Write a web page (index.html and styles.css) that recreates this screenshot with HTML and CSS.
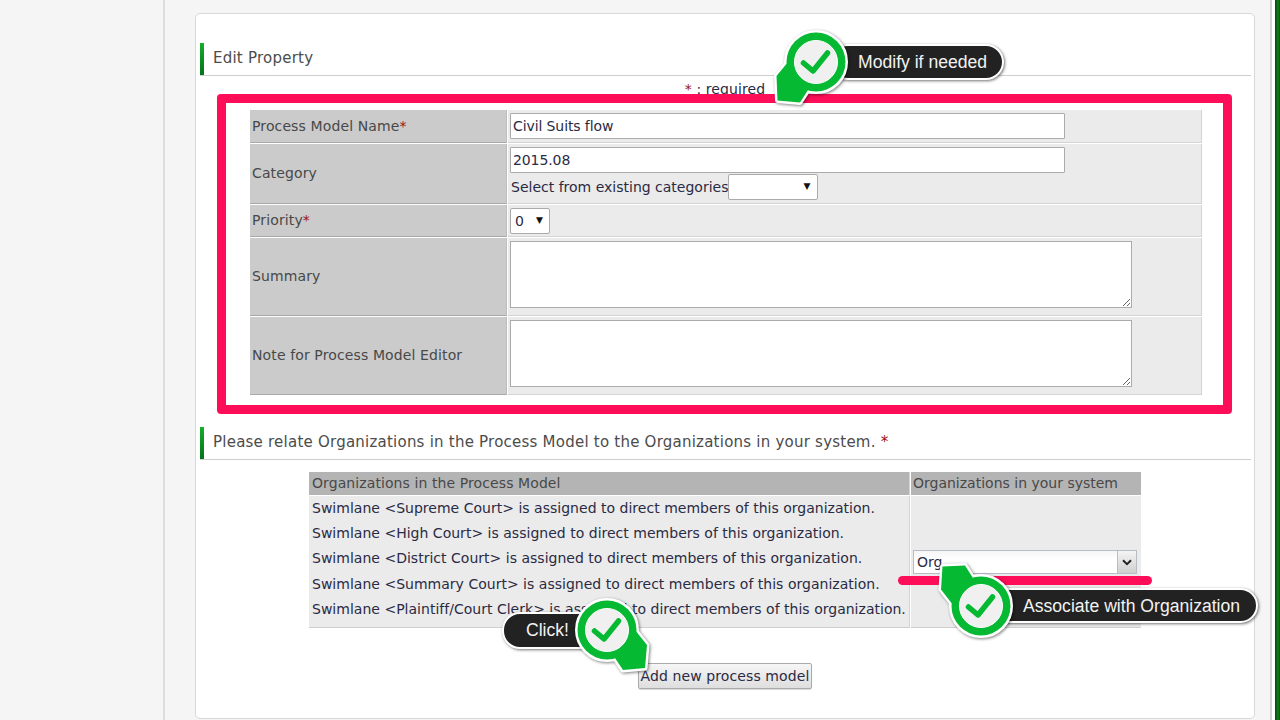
FILE: index.html
```html
<!DOCTYPE html>
<html lang="en">
<head>
<meta charset="utf-8">
<title>Edit Property</title>
<link rel="stylesheet" href="styles.css">
</head>
<body>
<div class="page">
  <aside class="sidebar"></aside>
  <main class="main">
    <section class="panel">
      <h2 class="heading">Edit Property</h2>
      <p class="required"><span class="star">*</span> : required</p>
      <table class="form">
        <tr class="r1">
          <th>Process Model Name<span class="star">*</span></th>
          <td><input class="text" type="text" value="Civil Suits flow"></td>
        </tr>
        <tr class="r2">
          <th>Category</th>
          <td>
            <input class="text" type="text" value="2015.08">
            <div class="cat">Select from existing categories<span class="sel sel-cat"><select></select></span></div>
          </td>
        </tr>
        <tr class="r3">
          <th>Priority<span class="star">*</span></th>
          <td><span class="sel sel-pri"><select><option>0</option></select></span></td>
        </tr>
        <tr class="r4">
          <th>Summary</th>
          <td><textarea></textarea></td>
        </tr>
        <tr class="r5">
          <th>Note for Process Model Editor</th>
          <td><textarea></textarea></td>
        </tr>
      </table>
      <h2 class="heading second">Please relate Organizations in the Process Model to the Organizations in your system. <span class="star">*</span></h2>
      <table class="orgs">
        <tr>
          <th class="c1">Organizations in the Process Model</th>
          <th class="c2">Organizations in your system</th>
        </tr>
        <tr>
          <td class="c1">
            <div class="line">Swimlane &lt;Supreme Court&gt; is assigned to direct members of this organization.</div>
            <div class="line">Swimlane &lt;High Court&gt; is assigned to direct members of this organization.</div>
            <div class="line">Swimlane &lt;District Court&gt; is assigned to direct members of this organization.</div>
            <div class="line">Swimlane &lt;Summary Court&gt; is assigned to direct members of this organization.</div>
            <div class="line">Swimlane &lt;Plaintiff/Court Clerk&gt; is assigned to direct members of this organization.</div>
          </td>
          <td class="c2">
            <div class="combo"><span class="combo-text">Org</span><span class="combo-btn"><svg width="10" height="7" viewBox="0 0 10 7"><path d="M1 1.2 5 5.2 9 1.2" fill="none" stroke="#222" stroke-width="2"/></svg></span></div>
          </td>
        </tr>
      </table>
      <div class="actions"><button class="add" type="button">Add new process model</button></div>
    </section>
  </main>
  <div class="edge"></div>

  <div class="box"></div>
  <div class="underline"></div>

  <div class="pill pill-1">Modify if needed</div>
  <svg class="pin pin-1" width="90" height="90" viewBox="-45 -45 90 90">
    <g class="pin-edge"><circle r="29.5"/><path d="M-39.5 14-28 0 0 0-8 28-16 40.5-38.5 38.5Z"/></g>
    <g class="pin-fill"><circle r="29.5"/><path d="M-39.5 14-28 0 0 0-8 28-16 40.5-38.5 38.5Z"/></g>
    <circle class="pin-face" r="21.5"/>
    <path class="pin-check" d="M-12.5 1-3 9 11.5-9"/>
  </svg>

  <div class="pill pill-2">Associate with Organization</div>
  <svg class="pin pin-2" width="90" height="90" viewBox="-45 -45 90 90">
    <g class="pin-edge"><circle r="29.5"/><path d="M-40-16.5-28-1 0 0-8-28-16-40.5-38.5-39.5Z"/></g>
    <g class="pin-fill"><circle r="29.5"/><path d="M-40-16.5-28-1 0 0-8-28-16-40.5-38.5-39.5Z"/></g>
    <circle class="pin-face" r="21.5"/>
    <path class="pin-check" d="M-12.5 1-3 9 11.5-9"/>
  </svg>

  <div class="pill pill-3">Click!</div>
  <svg class="pin pin-3" width="90" height="90" viewBox="-45 -45 90 90">
    <g class="pin-edge"><circle r="29.5"/><path d="M40 15 28 0 0 0 8 28 16 40 38 38Z"/></g>
    <g class="pin-fill"><circle r="29.5"/><path d="M40 15 28 0 0 0 8 28 16 40 38 38Z"/></g>
    <circle class="pin-face" r="21.5"/>
    <path class="pin-check" d="M-12.5 1-3 9 11.5-9"/>
  </svg>
</div>
</body>
</html>
```
FILE: styles.css
```css
* { box-sizing: border-box; }
html, body { margin: 0; padding: 0; }
body {
  font-family: "DejaVu Sans", sans-serif;
  font-size: 14px;
  color: #2a2a44;
  background: #f5f5f5;
}
.page {
  position: relative;
  display: flex;
  width: 1280px;
  height: 720px;
  overflow: hidden;
  background: #f5f5f5;
}
.sidebar {
  width: 165px;
  flex: none;
  border-right: 2px solid #dcdcdc;
}
.main {
  flex: 1;
  padding: 13px 15px 1px 30px;
}
.edge {
  width: 10px;
  flex: none;
  border-left: 2px solid #d4d4d4;
  background: linear-gradient(90deg, #fff 0 3.5px, #0a5010 3.5px, #118016 6px, #0a5010);
}
.panel {
  height: 706px;
  padding: 29px 4px 0 4px;
  background: #fff;
  border: 1px solid #d8d8d8;
  border-radius: 5px;
}
.heading {
  margin: 0 -1px 0 0;
  height: 32px;
  padding-left: 9px;
  font-size: 15px;
  font-weight: 400;
  line-height: 30px;
  letter-spacing: 0.23px;
  color: #4c4c4c;
  border-style: solid;
  border-width: 0 0 0 4px;
  border-image: linear-gradient(#14b02a, #05701a) 1;
  box-shadow: 0 1px 0 #cfcfcf;
}
.heading.second { margin-top: 31px; }
.star { color: #a01010; }
.required {
  margin: 6px 0 0;
  height: 28px;
  line-height: 16px;
  text-align: center;
  letter-spacing: 0.1px;
}
.form, .orgs {
  margin: 0 auto;
  border-collapse: separate;
  border-spacing: 1px;
  table-layout: fixed;
}
.form { width: 954px; margin-left: 49px; }
.form th {
  width: 257px;
  padding: 0 2px 2px;
  text-align: left;
  font-weight: 400;
  letter-spacing: 0.12px;
  color: #484848;
  background: #cbcbcb;
  border-right: 1px solid #bdbdbd;
  border-bottom: 1px solid #a8a8a8;
}
.form .r1 th { padding-bottom: 0; }
.form td {
  padding: 3px 2px 0;
  vertical-align: top;
  background: #ebebeb;
  border-right: 1px solid #d4d4d4;
  border-bottom: 1px solid #d4d4d4;
}
.r1 th, .r1 td { height: 33px; }
.r2 th, .r2 td { height: 60px; }
.r3 th, .r3 td { height: 32px; }
.r4 th, .r4 td { height: 78px; }
.r5 th, .r5 td { height: 78px; }
.text {
  display: block;
  width: 555px;
  height: 26px;
  margin: 0;
  padding: 1px 2px 1px 1px;
  text-indent: 1px;
  font: inherit;
  letter-spacing: -0.1px;
  color: inherit;
  background: #fff;
  border: 1px solid #ababab;
  border-radius: 1px;
  outline: 0;
}
.cat { display: flex; align-items: center; height: 27px; padding-left: 1px; }
.sel { position: relative; display: inline-block; }
.sel select {
  display: block;
  height: 26px;
  padding: 0 4px;
  font: inherit;
  color: inherit;
  appearance: none;
  background: #fff;
  border: 1px solid #ababab;
  border-radius: 2px;
}
.sel::after {
  content: "▼";
  position: absolute;
  top: 7px;
  font-size: 9px;
  color: #111;
}
.sel-cat::after { right: 8px; }
.sel-pri::after { right: 7px; }
.sel-cat select { width: 90px; }
.sel-pri select { width: 40px; }
textarea {
  display: block;
  width: 622px;
  height: 67px;
  margin: 0;
  background: #fff;
  border: 1px solid #ababab;
  border-radius: 0;
  outline: 0;
}
.orgs { width: 834px; margin-top: 12px; }
.orgs th {
  height: 23px;
  padding: 0 2px 2px;
  text-align: left;
  font-weight: 400;
  color: #484848;
  background: #b4b4b4;
}
.orgs .c1 { width: 601px; letter-spacing: 0.015px; border-right: 1px solid #d4d4d4; }
.orgs th.c1 { padding-left: 3px; letter-spacing: 0.09px; }
.orgs td {
  padding: 2px 2px 3px;
  vertical-align: top;
  background: #ebebeb;
  border-bottom: 1px solid #cfcfcf;
}
.orgs td.c1 { padding-left: 3px; }
.line { height: 25.2px; line-height: 21px; }
.orgs td.c2 { padding: 54px 3px 0 2px; }
.combo {
  display: flex;
  height: 24px;
  width: 224px;
  background: linear-gradient(#f6f6f6, #fff 40%);
  border: 1px solid #b8bcc8;
}
.combo-text { flex: 1; padding: 1px 3px; line-height: 20px; }
.combo-btn {
  display: flex;
  align-items: center;
  justify-content: center;
  width: 19px;
  background: linear-gradient(#f4f4f4, #cfcfcf);
  border-left: 1px solid #b8bcc8;
}
.actions { margin-top: 34px; text-align: center; }
.add {
  width: 174px;
  height: 26px;
  padding: 0;
  font: inherit;
  letter-spacing: 0.1px;
  color: inherit;
  background: linear-gradient(#f6f6f6, #dedede);
  border: 1px solid #aaa;
  border-radius: 2px;
  box-shadow: 0 1px 1px rgba(0,0,0,.15);
}
.box {
  position: absolute;
  left: 217px;
  top: 94px;
  width: 1015px;
  height: 320px;
  border: 9px solid #fe0d58;
  border-radius: 4px;
}
.underline {
  position: absolute;
  left: 898px;
  top: 576px;
  width: 254px;
  height: 9px;
  border-radius: 5px;
  background: #fe0d58;
}
.pill {
  position: absolute;
  display: flex;
  align-items: center;
  color: #f2f2f2;
  font-family: "Liberation Sans", sans-serif;
  font-size: 17.6px;
  white-space: nowrap;
  background: #222;
  border: 2px solid #fff;
  border-radius: 18px;
  box-shadow: 1px 1px 3px rgba(0,0,0,.55);
}
.pill-1 { left: 830px; top: 44px; width: 174px; height: 36px; padding-left: 26px; }
.pill-2 { left: 990px; top: 588px; width: 268px; height: 35px; padding: 1px 0 0 31px; }
.pill-3 { left: 502px; top: 612px; width: 110px; height: 37px; padding-left: 22px; }
.pin {
  position: absolute;
  filter: drop-shadow(1px 1px 1.5px rgba(0,0,0,.5));
}
.pin-1 { left: 771px; top: 17px; }
.pin-2 { left: 936px; top: 561px; }
.pin-3 { left: 562px; top: 585px; }
.pin-edge { fill: #fff; stroke: #fff; stroke-width: 5; stroke-linejoin: round; }
.pin-fill { fill: #06b932; }
.pin-face { fill: #f0f0f0; stroke: #fff; stroke-width: 1; }
.pin-check { fill: none; stroke: #06b932; stroke-width: 5.5; stroke-linecap: round; stroke-linejoin: round; }
```
